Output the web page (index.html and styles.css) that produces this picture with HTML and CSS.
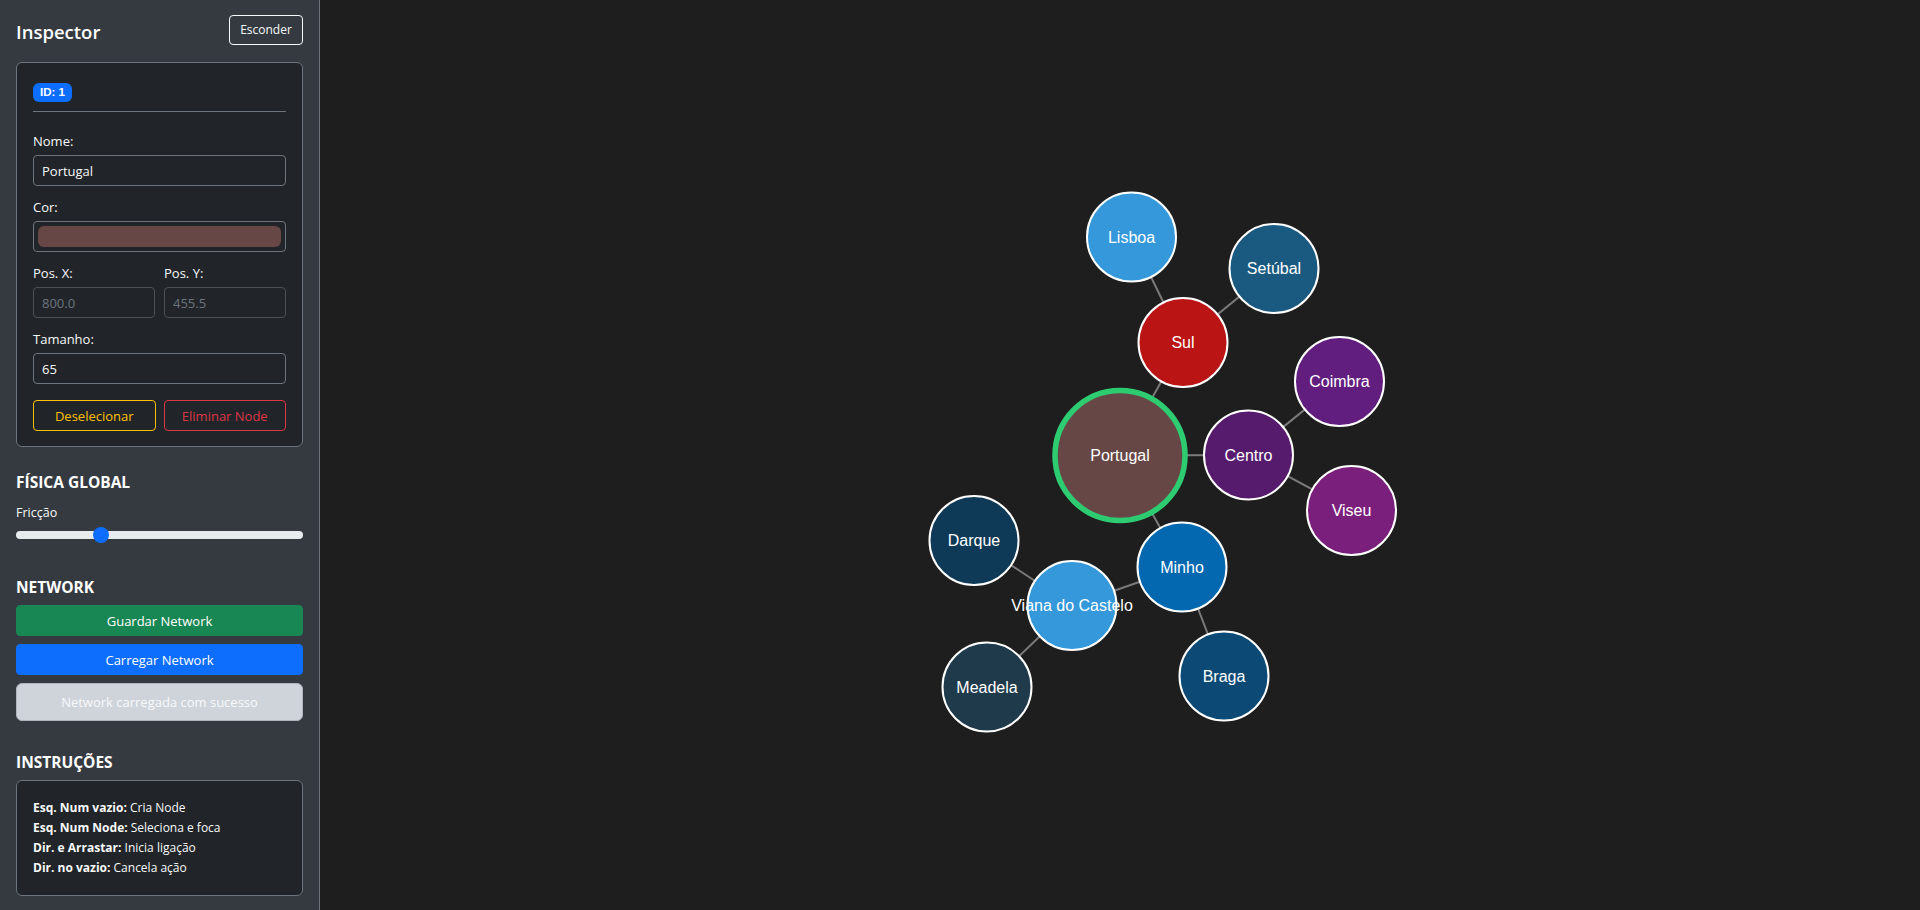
FILE: index.html
```html
<!DOCTYPE html>
<html lang="pt">
<head>
<meta charset="utf-8">
<title>Network Inspector</title>
<link rel="stylesheet" href="styles.css">
</head>
<body>
<div class="app">
  <aside class="sidebar">
    <div class="sb-header">
      <h5 class="title">Inspector</h5>
      <button class="btn btn-outline-light">Esconder</button>
    </div>

    <div class="card inspector">
      <div class="badge-row"><span class="badge">ID: 1</span></div>
      <hr class="divider">
      <div class="field">
        <label class="label">Nome:</label>
        <input class="input" type="text" value="Portugal">
      </div>
      <div class="field">
        <label class="label">Cor:</label>
        <input class="color-input" type="color" value="#664745">
      </div>
      <div class="field pos-grid">
        <div>
          <label class="label">Pos. X:</label>
          <input class="input readonly" type="text" value="800.0" readonly>
        </div>
        <div>
          <label class="label">Pos. Y:</label>
          <input class="input readonly" type="text" value="455.5" readonly>
        </div>
      </div>
      <div class="field last">
        <label class="label">Tamanho:</label>
        <input class="input" type="text" value="65">
      </div>
      <div class="btn-row">
        <button class="btn btn-outline-warning">Deselecionar</button>
        <button class="btn btn-outline-danger">Eliminar Node</button>
      </div>
    </div>

    <section class="section physics">
      <h6 class="section-title">FÍSICA GLOBAL</h6>
      <label class="label small">Fricção</label>
      <input class="range" type="range" min="0" max="100" step="0.1" value="28.4">
    </section>

    <section class="section network">
      <h6 class="section-title">NETWORK</h6>
      <div class="stack">
        <button class="btn btn-success block">Guardar Network</button>
        <button class="btn btn-primary block">Carregar Network</button>
        <div class="status">Network carregada com sucesso</div>
      </div>
    </section>

    <section class="section instructions">
      <h6 class="section-title">INSTRUÇÕES</h6>
      <div class="card help">
        <div class="help-line"><strong>Esq. Num vazio:</strong> Cria Node</div>
        <div class="help-line"><strong>Esq. Num Node:</strong> Seleciona e foca</div>
        <div class="help-line"><strong>Dir. e Arrastar:</strong> Inicia ligação</div>
        <div class="help-line"><strong>Dir. no vazio:</strong> Cancela ação</div>
      </div>
    </section>
  </aside>

  <main class="canvas-area">
    <svg class="graph" viewBox="0 0 1600 910" xmlns="http://www.w3.org/2000/svg">
      <g class="edges">
        <line x1="800" y1="455.5" x2="863" y2="342.5"/>
        <line x1="863" y1="342.5" x2="811.5" y2="237"/>
        <line x1="863" y1="342.5" x2="954" y2="268.5"/>
        <line x1="800" y1="455.5" x2="928.5" y2="455"/>
        <line x1="928.5" y1="455" x2="1019.5" y2="381.5"/>
        <line x1="928.5" y1="455" x2="1031.5" y2="510.5"/>
        <line x1="800" y1="455.5" x2="862" y2="567"/>
        <line x1="862" y1="567" x2="752" y2="605.5"/>
        <line x1="862" y1="567" x2="904" y2="676"/>
        <line x1="752" y1="605.5" x2="654" y2="540.5"/>
        <line x1="752" y1="605.5" x2="667" y2="687"/>
      </g>
      <g class="nodes">
        <circle class="node selected" cx="800" cy="455.5" r="65" fill="#664745"/>
        <circle class="node" cx="863" cy="342.5" r="44.5" fill="#bb1414"/>
        <circle class="node" cx="811.5" cy="237" r="44.5" fill="#3498db"/>
        <circle class="node" cx="954" cy="268.5" r="44.5" fill="#1b5a80"/>
        <circle class="node" cx="928.5" cy="455" r="44.5" fill="#571b6e"/>
        <circle class="node" cx="1019.5" cy="381.5" r="44.5" fill="#621e7e"/>
        <circle class="node" cx="1031.5" cy="510.5" r="44.5" fill="#7a1f7c"/>
        <circle class="node" cx="862" cy="567" r="44.5" fill="#0368b0"/>
        <circle class="node" cx="654" cy="540.5" r="44.5" fill="#0e3a57"/>
        <circle class="node" cx="752" cy="605.5" r="44.5" fill="#3498db"/>
        <circle class="node" cx="667" cy="687" r="44.5" fill="#1f3a4b"/>
        <circle class="node" cx="904" cy="676" r="44.5" fill="#0c4a75"/>
      </g>
      <g class="labels">
        <text x="800" y="455.5">Portugal</text>
        <text x="863" y="342.5">Sul</text>
        <text x="811.5" y="237">Lisboa</text>
        <text x="954" y="268.5">Setúbal</text>
        <text x="928.5" y="455">Centro</text>
        <text x="1019.5" y="381.5">Coimbra</text>
        <text x="1031.5" y="510.5">Viseu</text>
        <text x="862" y="567">Minho</text>
        <text x="654" y="540.5">Darque</text>
        <text x="752" y="605.5">Viana do Castelo</text>
        <text x="667" y="687">Meadela</text>
        <text x="904" y="676">Braga</text>
      </g>
    </svg>
  </main>
</div>
</body>
</html>
```

FILE: styles.css
```css
* { box-sizing: border-box; }

html, body {
  margin: 0;
  padding: 0;
  height: 100%;
}

body {
  font-family: "Open Sans", "Noto Sans", sans-serif;
  font-size: 13px;
  color: #f8f9fa;
  background: #1e1e1e;
  overflow: hidden;
}

.app {
  display: flex;
  height: 910px;
}

/* ---------- Sidebar ---------- */
.sidebar {
  width: 320px;
  flex: 0 0 320px;
  background: #343a40;
  border-right: 1px solid #6c757d;
  padding: 15px 16px 0 16px;
  display: flex;
  flex-direction: column;
}

.sb-header {
  display: flex;
  align-items: center;
  justify-content: space-between;
  height: 30px;
  margin-bottom: 17px;
}

.title {
  margin: 0;
  font-size: 18.5px;
  font-weight: 600;
  line-height: 24px;
  color: #fff;
  padding-top: 4px;
}

.btn {
  font-family: inherit;
  font-size: 12.5px;
  line-height: 20px;
  border-radius: 4px;
  border: 1px solid transparent;
  background: transparent;
  cursor: pointer;
  padding: 4px 8px;
  color: #fff;
}

.btn-outline-light {
  border-color: #f8f9fa;
  color: #f8f9fa;
  height: 30px;
  width: 74px;
  padding: 0;
  font-size: 12px;
}

.card {
  background: #212529;
  border: 1px solid #6c757d;
  border-radius: 6px;
}

.inspector {
  padding: 16px 16px 15px 16px;
}

.badge-row {
  margin-top: 3px;
  height: 19px;
}

.badge {
  display: inline-block;
  height: 19px;
  line-height: 19px;
  padding: 0 7px;
  background: #0d6efd;
  color: #fff;
  border-radius: 6px;
  font-family: "Liberation Sans", Arial, sans-serif;
  font-weight: 700;
  font-size: 11.5px;
}

.divider {
  border: 0;
  border-top: 1px solid #6c757d;
  margin: 10px 0 19px 0;
}

.field {
  margin-bottom: 11px;
}

.field.last {
  margin-bottom: 16px;
}

.label {
  display: block;
  font-size: 13px;
  line-height: 21px;
  margin-bottom: 3px;
  color: #f8f9fa;
}

.input {
  display: block;
  width: 100%;
  height: 31px;
  background: #212529;
  border: 1px solid #6c757d;
  border-radius: 4px;
  color: #f8f9fa;
  font-family: inherit;
  font-size: 13px;
  padding: 0 8px;
  outline: none;
}

.input.readonly {
  color: #6c757d;
  border-color: #495057;
}

.color-input {
  display: block;
  width: 100%;
  height: 31px;
  padding: 4px;
  background: #212529;
  border: 1px solid #6c757d;
  border-radius: 4px;
  -webkit-appearance: none;
  appearance: none;
  cursor: pointer;
}

.color-input::-webkit-color-swatch-wrapper { padding: 0; }
.color-input::-webkit-color-swatch {
  border: none;
  border-radius: 6px;
}

.pos-grid {
  display: grid;
  grid-template-columns: 1fr 1fr;
  column-gap: 9px;
}

.btn-row {
  display: flex;
  gap: 8px;
}

.btn-row .btn {
  flex: 1;
  height: 31px;
  font-size: 13px;
  padding: 0;
}

.btn-outline-warning {
  border-color: #ffc107;
  color: #ffc107;
}

.btn-outline-danger {
  border-color: #dc3545;
  color: #dc3545;
}

/* ---------- Sections ---------- */
.section-title {
  margin: 0;
  font-size: 15.5px;
  font-weight: 700;
  line-height: 19px;
  color: #fff;
}

.physics {
  margin-top: 26px;
}

.physics .section-title { margin-bottom: 10px; }

.label.small {
  font-size: 12.5px;
  margin-bottom: 4px;
}

.range {
  -webkit-appearance: none;
  appearance: none;
  display: block;
  width: 100%;
  height: 16px;
  margin: 0;
  background: transparent;
}

.range::-webkit-slider-runnable-track {
  height: 8px;
  background: #e9ecef;
  border-radius: 4px;
}

.range::-webkit-slider-thumb {
  -webkit-appearance: none;
  appearance: none;
  width: 16px;
  height: 16px;
  border-radius: 50%;
  background: #0d6efd;
  border: none;
  margin-top: -4px;
}

.network {
  margin-top: 35px;
}

.network .section-title { margin-bottom: 8px; }

.stack {
  display: flex;
  flex-direction: column;
  gap: 8px;
}

.btn.block {
  width: 100%;
  height: 31px;
  font-size: 13px;
  padding: 0;
}

.btn-success { background: #198754; border-color: #198754; }
.btn-primary { background: #0d6efd; border-color: #0d6efd; }

.status {
  height: 38px;
  background: #ced4da;
  border: 1px solid #adb5bd;
  border-radius: 6px;
  color: #f8f9fa;
  font-size: 13px;
  display: flex;
  align-items: center;
  justify-content: center;
}

.instructions {
  margin-top: 32px;
}

.instructions .section-title { margin-bottom: 8px; }

.help {
  padding: 17px 16px;
}

.help-line {
  font-size: 12px;
  line-height: 20px;
  color: #f8f9fa;
}

.help-line strong { font-weight: 700; }

/* ---------- Canvas ---------- */
.canvas-area {
  flex: 1;
  background: #1e1e1e;
  position: relative;
  overflow: hidden;
}

.graph {
  display: block;
  width: 1600px;
  height: 910px;
}

.edges line {
  stroke: #7a7a7a;
  stroke-width: 2;
}

.node {
  stroke: #ffffff;
  stroke-width: 2;
}

.node.selected {
  stroke: #2ecc71;
  stroke-width: 5.5;
}

.labels text {
  fill: #ffffff;
  font-family: "Liberation Sans", Arial, sans-serif;
  font-size: 16px;
  text-anchor: middle;
  dominant-baseline: central;
}
```
